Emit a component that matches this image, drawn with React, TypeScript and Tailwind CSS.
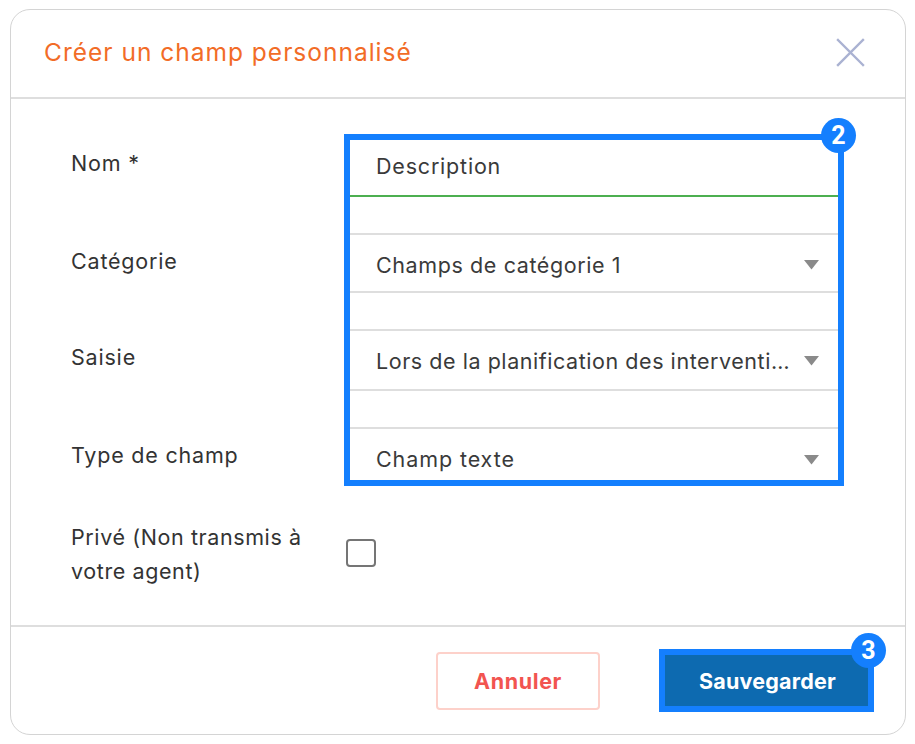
import React from "react";

function Caret() {
  return (
    <svg width="15" height="10" viewBox="0 0 15 10" className="shrink-0">
      <path d="M0 0H15L7.5 9.5Z" fill="#8a8a8a" />
    </svg>
  );
}

function Select({ value, className, textClass }: { value: string; className: string; textClass: string }) {
  return (
    <div className={`flex items-center pl-[26px] pr-[19px] border-t-2 border-[#dedede] ${className}`}>
      <span className={`flex-1 min-w-0 whitespace-nowrap text-[21.5px] text-[#3a3a3a] ${textClass}`}>{value}</span>
      <span className="ml-3"><Caret /></span>
    </div>
  );
}

function Badge({ n, className }: { n: number; className: string }) {
  return (
    <span className={`absolute flex items-center justify-center w-[35px] h-[35px] rounded-full bg-[#147ffe] text-white text-[25px] font-bold font-['Roboto',sans-serif] ${className}`}>
      {n}
    </span>
  );
}

function Label({ text, className }: { text: string; className: string }) {
  return <div className={`text-[21.5px] tracking-[0.8px] leading-[34px] text-[#333] ${className}`}>{text}</div>;
}

export default function App() {
  return (
    <div className="w-[915px] h-[744px] bg-white pt-[9px] pl-[10px] font-['Inter',sans-serif]">
      <div className="flex flex-col w-[896px] h-[726px] bg-white border border-[#d4d4d4] rounded-[20px]">
        <header className="flex items-center justify-between h-[89px] pl-[33px] pr-[40px] pb-[3px] border-b-2 border-[#dedede] shrink-0">
          <h1 className="text-[24.5px] font-normal tracking-[1px] text-[#f26c27]">Créer un champ personnalisé</h1>
          <svg width="29" height="29" viewBox="0 0 29 29">
            <path d="M2 2L27 27M27 2L2 27" stroke="#aab2d2" strokeWidth="2.4" strokeLinecap="square" fill="none" />
          </svg>
        </header>

        <main className="flex-1 pl-[60px] pt-[35px]">
          <div className="flex">
            <div className="w-[273px] shrink-0 flex flex-col pt-[12px]">
              <Label text="Nom *" className="h-[98px]" />
              <Label text="Catégorie" className="h-[96px]" />
              <Label text="Saisie" className="h-[98px]" />
              <Label text="Type de champ" className="h-[34px]" />
            </div>
            <div className="relative w-[500px] h-[352px] border-[6px] border-[#147ffe] bg-white">
              <div className="flex items-center h-[57px] pl-[26px] border-b-2 border-[#4caf50] mb-[36px] pb-[3px]">
                <span className="text-[21.5px] tracking-[0.8px] text-[#3a3a3a]">Description</span>
              </div>
              <Select value="Champs de catégorie 1" textClass="tracking-[0.6px]" className="h-[60px] border-b-2 mb-[36px] pt-[4px]" />
              <Select value="Lors de la planification des interventi…" textClass="tracking-[0.55px]" className="h-[62px] border-b-2 mb-[36px] pt-[2px]" />
              <Select value="Champ texte" textClass="tracking-[0.9px]" className="h-[53px] pt-[10px]" />
              <Badge n={2} className="top-[-22px] right-[-18px]" />
            </div>
          </div>
          <div className="flex items-center mt-[31px]">
            <div className="w-[275px] shrink-0 mt-[3px] text-[21.5px] tracking-[0.6px] leading-[34px] text-[#333]">
              Privé (Non transmis à<br />votre agent)
            </div>
            <span className="w-[30px] h-[28px] border-2 border-[#757575] rounded-[4px] bg-white" />
          </div>
        </main>

        <footer className="flex items-start h-[109px] shrink-0 border-t-2 border-[#dedede] pl-[425px] pt-[22px]">
          <button className="mt-[3px] w-[164px] h-[58px] bg-white border-2 border-[#fdd1ca] rounded-[4px] text-[21.5px] tracking-[0.6px] font-bold text-[#f25450]">
            Annuler
          </button>
          <button className="relative ml-[59px] w-[215px] h-[63px] border-[6px] border-[#147ffe] bg-[#0d6ab0] pl-[2px] pt-[1px] text-[21.5px] tracking-[0.2px] font-bold text-white">
            Sauvegarder
            <Badge n={3} className="top-[-22px] right-[-18px]" />
          </button>
        </footer>
      </div>
    </div>
  );
}
